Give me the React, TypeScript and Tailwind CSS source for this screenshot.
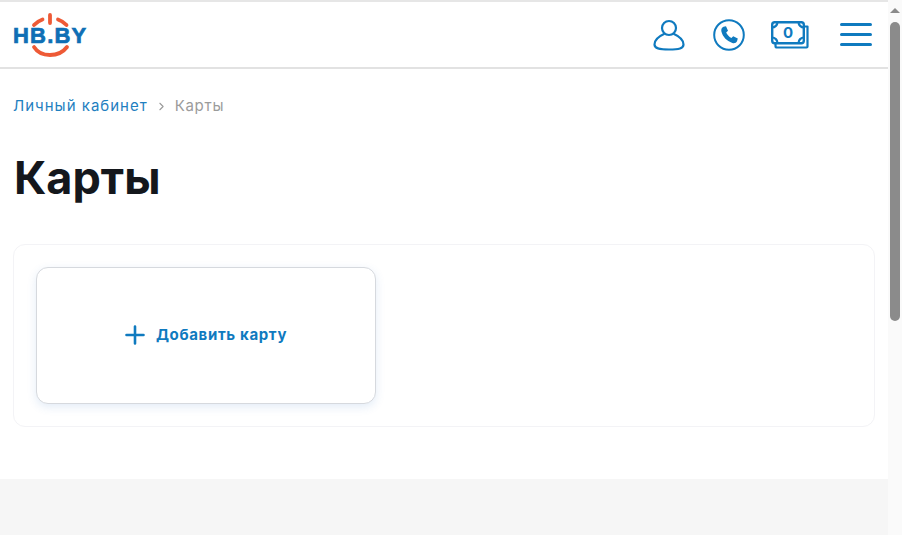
import { ChevronRight } from "lucide-react";

const blue = "#0f7abf";

function Logo() {
  return (
    <div className="relative w-[76px] h-[46px]">
      <svg className="absolute left-0 top-0" width="76" height="46" viewBox="0 0 76 46" fill="none">
        <path d="M37 3V11" stroke="#ee5a36" strokeWidth="3.8" strokeLinecap="round" />
        <path d="M29.5 7.5Q24 9.5 21 13" stroke="#ee5a36" strokeWidth="3.8" strokeLinecap="round" />
        <path d="M45 7.5Q50.5 9.5 53.5 13" stroke="#ee5a36" strokeWidth="3.8" strokeLinecap="round" />
        <path d="M21 35Q26 43 37 43Q48 43 54 35" stroke="#ee5a36" strokeWidth="3.8" strokeLinecap="round" />
      </svg>
      <span className="absolute left-0 top-[13px] font-['Liberation_Sans',sans-serif] font-bold text-[22px] leading-[22px] tracking-[1.2px] text-[#0f6fb5] [-webkit-text-stroke:0.7px_#0f6fb5]">
        HB.BY
      </span>
    </div>
  );
}

function UserIcon() {
  return (
    <svg width="32" height="32" viewBox="0 0 32 32" fill="none" stroke={blue} strokeWidth="2.2">
      <circle cx="16" cy="9" r="7" />
      <path d="M11 15C5.5 17.5 1.5 21 1.5 25.5C1.5 29.5 6 30.5 16 30.5C26 30.5 30.5 29.5 30.5 25.5C30.5 21 26.5 17.5 21 15" strokeLinecap="round" />
    </svg>
  );
}

function PhoneIcon() {
  return (
    <svg width="32" height="32" viewBox="0 0 32 32" fill="none">
      <circle cx="16" cy="16" r="14.8" stroke={blue} strokeWidth="2" />
      <path
        d="M10.5 7.8L13 7.2L15 11.8L13.2 13.6C14 15.6 16 18 18.4 19L20.2 17.2L24.8 19.6L24 22.2C23.4 23.8 21.4 24.6 19.4 24C13.6 22.2 9.6 17.6 8.4 12.6C7.9 10.4 8.8 8.4 10.5 7.8Z"
        fill={blue}
      />
    </svg>
  );
}

function MoneyIcon() {
  return (
    <div className="relative w-[38px] h-[28px]">
      <svg className="absolute left-0 top-0" width="38" height="28" viewBox="0 0 38 28" fill="none" stroke={blue} strokeWidth="2.2">
        <path d="M34 5.5H36.5V25.5C36.5 26 36 26.5 35.5 26.5H6C5 26.5 4.5 26 4.5 25V23" strokeLinejoin="round" />
        <rect x="1.2" y="1.2" width="31.6" height="21" rx="2.5" strokeWidth="2.4" />
        <path d="M1 6.5C4 6.5 6.5 4 6.5 1M27.5 1C27.5 4 30 6.5 33 6.5M1 16.5C4 16.5 6.5 19 6.5 22M27.5 22C27.5 19 30 16.5 33 16.5" />
      </svg>
      <span className="absolute left-0 top-[3px] w-[34px] text-center font-['Inter',sans-serif] font-bold text-[15px] leading-[18px] text-[#0f7abf]">
        0
      </span>
    </div>
  );
}

function BurgerIcon() {
  return (
    <div className="flex flex-col gap-[7.5px] w-[32px]">
      <div className="h-[2.5px] rounded-full bg-[#0f7abf]" />
      <div className="h-[2.5px] rounded-full bg-[#0f7abf]" />
      <div className="h-[2.5px] rounded-full bg-[#0f7abf]" />
    </div>
  );
}

function PlusIcon() {
  return (
    <svg width="20" height="20" viewBox="0 0 20 20" fill="none" stroke={blue} strokeWidth="2.6" strokeLinecap="round">
      <path d="M10 1.5V18.5M1.5 10H18.5" />
    </svg>
  );
}

function Scrollbar() {
  return (
    <aside className="w-[14px] shrink-0 bg-[#fafafa] flex flex-col items-center pt-[8px]">
      <div className="w-0 h-0 border-x-[5px] border-x-transparent border-b-[5px] border-b-[#8a8a8a]" />
      <div className="mt-[9px] w-[10px] h-[299px] rounded-[5px] bg-[#8b8b8b]" />
    </aside>
  );
}

export default function App() {
  return (
    <div className="h-[535px] overflow-hidden flex bg-white font-['Inter','Noto_Sans',sans-serif]">
      <main className="flex-1 min-w-0 flex flex-col">
        <header className="h-[69px] shrink-0 border-t-2 border-t-[#e6e6e6] border-b-2 border-b-[#e2e2e2] flex items-center justify-between pl-[13px] pr-[16px]">
          <Logo />
          <div className="flex items-center">
            <UserIcon />
            <div className="ml-[28px]"><PhoneIcon /></div>
            <div className="ml-[26px]"><MoneyIcon /></div>
            <div className="ml-[31px]"><BurgerIcon /></div>
          </div>
        </header>

        <nav className="mt-[27px] pl-[13px] flex items-center text-[15px] leading-[20px] tracking-[1px]">
          <span className="text-[#1f80c0]">Личный кабинет</span>
          <ChevronRight className="w-[13px] h-[13px] ml-[7px] mr-[7px] text-[#9a9a9a]" />
          <span className="text-[#9b9b9b] tracking-[0.7px]">Карты</span>
        </nav>

        <h1 className="mt-[35px] pl-[14px] text-[45px] leading-[54px] font-bold text-[#14171c]">Карты</h1>

        <section className="mt-[39px] mx-[13px] h-[183px] rounded-[12px] border border-[#f3f3f6] p-[22px]">
          <button className="w-[340px] h-[137px] pb-[1px] rounded-[12px] border border-[#d6d9de] bg-white shadow-[0_3px_10px_rgba(60,120,200,0.14)] flex items-center justify-center gap-[11px]">
            <PlusIcon />
            <span className="text-[15px] font-bold tracking-[0.65px] text-[#0f7abf]">Добавить карту</span>
          </button>
        </section>

        <footer className="mt-[52px] flex-1 bg-[#f6f6f6]" />
      </main>
      <Scrollbar />
    </div>
  );
}
